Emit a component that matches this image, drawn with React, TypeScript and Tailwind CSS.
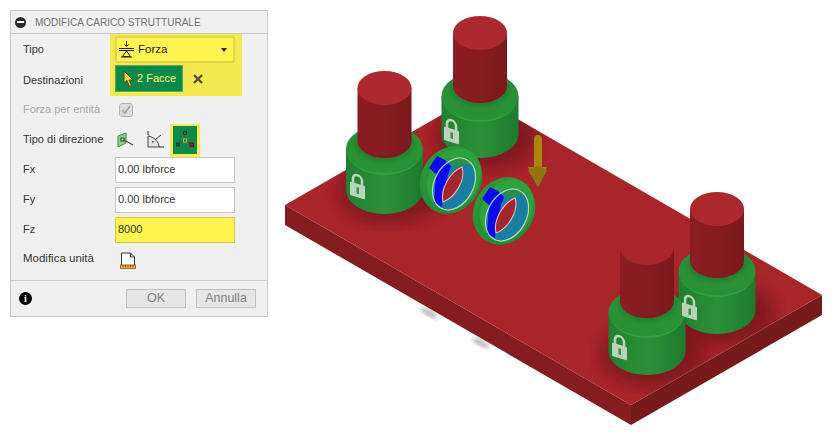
const font = { fontFamily: '"Liberation Sans", Arial, sans-serif' }

function ForceIcon() {
  return (
    <svg width="17" height="17" viewBox="0 0 17 17" fill="none" stroke="#222" strokeWidth="1">
      <path d="M8.5 0v5M6.5 3.5l2 2 2-2M1 7.5h15M1 9.5h15M8.5 10l-4 5.5h8zM3 16h11" />
    </svg>
  )
}

function CursorIcon() {
  return (
    <svg width="12" height="18" viewBox="0 0 12 18">
      <path d="M1 1l0 12 3-2.5 2.5 6 2-1-2.5-5.5 4 0z" fill="#efd33f" stroke="#5a4b12" strokeWidth="1" />
    </svg>
  )
}

function PlaneIcon() {
  return (
    <svg width="18" height="16" viewBox="0 0 18 16" fill="none">
      <path d="M1 4l8-3v10l-8 4z" fill="#8fd48f" stroke="#2f8f3f" />
      <rect x="4" y="6" width="3" height="3" fill="#fff" stroke="#222" />
      <path d="M7 8l9 5" stroke="#6b3a4a" strokeWidth="1.2" />
    </svg>
  )
}

function AngleIcon() {
  return (
    <svg width="18" height="18" viewBox="0 0 18 18" fill="none">
      <path d="M2 5v11h11c0-5-4-9-10-11z" fill="#dfe3ea" stroke="#444" />
      <path d="M2 0v4M9 9l6-5M13 16h5" stroke="#333" />
      <rect x="6" y="10" width="1.5" height="1.5" fill="#333" />
    </svg>
  )
}

function AxesIcon() {
  return (
    <svg width="20" height="20" viewBox="0 0 20 20" fill="none">
      <path d="M10 4v7M10 11l-6 3M10 11l6 3" stroke="#555" />
      <rect x="8.5" y="1.5" width="3" height="3" stroke="#1d3f2c" />
      <rect x="8.5" y="9" width="3" height="3" fill="#1c5f35" stroke="#d8b347" />
      <rect x="1.5" y="13" width="3" height="3" fill="#0e5a2a" stroke="#1d3f2c" />
      <rect x="15" y="13" width="3.5" height="3.5" fill="#b3151b" stroke="#6b1013" />
    </svg>
  )
}

function UnitIcon() {
  return (
    <svg width="16" height="17" viewBox="0 0 16 17" fill="none">
      <path d="M1.5 1h9l4 4v9h-13z" fill="#fff" stroke="#333" />
      <path d="M10.5 1v4h4" stroke="#333" />
      <rect x="0.5" y="13" width="15" height="3.5" fill="#e6b04a" stroke="#a8701a" />
      <path d="M3 13v2M5.5 13v2M8 13v2M10.5 13v2M13 13v2" stroke="#7a5010" />
    </svg>
  )
}

function Lock({ x, y }: { x: number; y: number }) {
  return (
    <g transform={`matrix(1 0.3 0 1 ${x} ${y})`}>
      <path d="M3 10V5.5a4.5 4.5 0 0 1 9 0V10" fill="none" stroke="#b9d4ba" strokeWidth="2.6" />
      <rect x="0" y="9.5" width="15" height="13.5" rx="1" fill="#b9d4ba" />
      <rect x="6.5" y="13" width="2.5" height="6.5" fill="#3f8a4c" />
    </g>
  )
}

function Post({ cx, gTop, gBot, pTop, pBot, flatTop }: { cx: number; gTop: number; gBot: number; pTop: number; pBot: number; flatTop?: boolean }) {
  return (
    <g>
      <path d={`M${cx - 38.5} ${gTop}v${gBot - gTop}a38.5 24 0 0 0 77 0v${gTop - gBot}z`} fill="url(#greenSide)" />
      <ellipse cx={cx} cy={gTop} rx="38.5" ry="24" fill="#2a9137" />
      <path d={`M${cx - 38.5} ${gTop}a38.5 24 0 0 0 77 0a38.5 26 0 0 1 -77 0z`} fill="#33a140" />
      <ellipse cx={cx} cy={pBot + 2} rx="29" ry="18" fill="#1c6a28" opacity="0.55" filter="url(#blur2)" />
      <path d={`M${cx - 27} ${pTop}v${pBot - pTop}a27 17 0 0 0 54 0v${pTop - pBot}z`} fill="url(#redSide)" />
      <ellipse cx={cx} cy={pTop} rx="27" ry="17" fill={flatTop ? '#a8252a' : '#ad2930'} />
    </g>
  )
}

function Disk({ dx, dy }: { dx: number; dy: number }) {
  return (
    <g transform={`translate(${dx} ${dy})`}>
      <ellipse cx="451" cy="180" rx="30" ry="35" transform="rotate(30 451 180)" fill="url(#diskEdge)" />
      <ellipse cx="454" cy="179" rx="25" ry="32" transform="rotate(30 454 179)" fill="#2ea33c" />
      <ellipse cx="454" cy="184" rx="19.5" ry="27.5" transform="rotate(28 454 184)" fill="#1c7da3" />
      <path d="M448 159c10-4 20-3 26 4l1 4c-6-4-10-4-13-1l-8 1z" fill="#2a8f4a" />
      <path d="M437 156l-8 12 7 6-2 29 8 4 1-8 5-25 3-8-6-6z" fill="#0a0aee" />
      <path d="M462 167c4 12-6 30-19 35-3-13 7-30 19-35z" fill="#a3262c" stroke="#ecb3b0" strokeWidth="1.1" />
      <ellipse cx="454" cy="184" rx="19.5" ry="27.5" transform="rotate(28 454 184)" fill="none" stroke="#c9e6c8" strokeOpacity="0.85" strokeWidth="1.2" />
    </g>
  )
}

function Scene() {
  return (
    <svg className="shrink-0 w-[569px] h-[443px]" viewBox="268 0 569 443">
      <defs>
        <linearGradient id="greenSide" x1="0" x2="1" y1="0" y2="0">
          <stop offset="0" stopColor="#1f8030" />
          <stop offset="0.5" stopColor="#2d9038" />
          <stop offset="1" stopColor="#1e7a2e" />
        </linearGradient>
        <linearGradient id="redSide" x1="0" x2="1" y1="0" y2="0">
          <stop offset="0" stopColor="#8a1d21" />
          <stop offset="0.5" stopColor="#851c20" />
          <stop offset="1" stopColor="#7a191c" />
        </linearGradient>
        <linearGradient id="diskEdge" x1="0" x2="1" y1="0" y2="1">
          <stop offset="0" stopColor="#2c9a3a" />
          <stop offset="1" stopColor="#238a33" />
        </linearGradient>
        <filter id="blur6"><feGaussianBlur stdDeviation="7" /></filter>
        <filter id="blur2"><feGaussianBlur stdDeviation="2" /></filter>
        <clipPath id="plateTop"><path d="M285 205L476 95 822 295 631 405z" /></clipPath>
      </defs>

      <ellipse cx="429" cy="313" rx="10" ry="3" transform="rotate(28 429 313)" fill="#b5b5b5" filter="url(#blur2)" />
      <ellipse cx="481" cy="343" rx="10" ry="3" transform="rotate(28 481 343)" fill="#b5b5b5" filter="url(#blur2)" />

      <path d="M285 205L631 405v20L285 225z" fill="#851c20" />
      <path d="M631 405L822 295v20L631 425z" fill="#761a1c" />
      <path d="M285 205L476 95 822 295 631 405z" fill="#a8252a" />

      <g clipPath="url(#plateTop)">
        <ellipse cx="390" cy="192" rx="52" ry="32" fill="#5e1114" opacity="0.5" filter="url(#blur6)" />
        <ellipse cx="486" cy="138" rx="52" ry="32" fill="#5e1114" opacity="0.5" filter="url(#blur6)" />
        <ellipse cx="723" cy="314" rx="52" ry="32" fill="#5e1114" opacity="0.5" filter="url(#blur6)" />
        <ellipse cx="653" cy="355" rx="52" ry="32" fill="#5e1114" opacity="0.5" filter="url(#blur6)" />
      </g>

      <Post cx={480} gTop={96} gBot={134} pTop={33} pBot={86} />
      <Lock x={444} y={117} />
      <Post cx={384.5} gTop={149} gBot={190} pTop={88} pBot={141} />
      <Lock x={350} y={172} />
      <Disk dx={0} dy={0} />
      <Disk dx={53} dy={31} />

      <path d="M534 139a4 4 0 0 1 8 0v28h5l-9 20-10-20h6z" fill="#a6860f" />
      <path d="M528 170l10-4 9 4-9 17z" fill="#8f7410" />

      <Post cx={717} gTop={271} gBot={310} pTop={209} pBot={261} />
      <Post cx={647} gTop={312} gBot={351} pTop={248} pBot={301} flatTop />
      <Lock x={682} y={293} />
      <Lock x={612} y={333} />
    </svg>
  )
}

function Row({ label, children, muted, wide }: { label: string; children: React.ReactNode; muted?: boolean; wide?: boolean }) {
  return (
    <div className="flex items-center h-[30px]">
      <span className={`w-[92px] pb-[2px] ${wide ? 'text-[11.5px]' : ''} ${muted ? 'text-[#a8a8a8]' : 'text-[#333]'}`}>{label}</span>
      {children}
    </div>
  )
}

function Field({ value, hot }: { value: string; hot?: boolean }) {
  return (
    <div className={`w-[120px] h-[26px] flex items-center pl-[2px] pb-[2px] border ${hot ? 'bg-[#fff350] border-[#d9c93a]' : 'bg-white border-[#c8c8c8]'} text-[#333]`}>
      {value}
    </div>
  )
}

export default function App() {
  return (
    <div className="flex w-[837px] h-[443px] bg-white overflow-hidden text-[11px]" style={font}>
      <div className="shrink-0 ml-[10px] mt-[10px] w-[258px] h-[307px] bg-[#f0f0f0] border border-[#c8c8c8] flex flex-col">
        <div className="h-[23px] flex items-center gap-[9px] pl-[4px] border-b border-[#c8c8c8] text-[#6b7078] text-[10px]">
          <span className="w-[11px] h-[11px] rounded-full bg-[#2a2a2a] flex items-center justify-center">
            <span className="w-[7px] h-[1.5px] bg-white" />
          </span>
          MODIFICA CARICO STRUTTURALE
        </div>

        <div className="flex pl-[12px]">
          <div className="w-[87px] text-[#333]">
            <div className="h-[31px] flex items-center">Tipo</div>
            <div className="h-[30px] flex items-center">Destinazioni</div>
          </div>
          <div className="w-[132px] h-[62px] bg-[#f3e84f] pl-[5px] pt-[2px]">
            <div className="w-[120px] h-[27px] bg-[#fff350] border-2 border-[#e3d648] rounded-[2px] flex items-center pl-[1px] pr-[6px] gap-[3px] text-[#222] text-[11.5px]">
              <ForceIcon />
              <span className="flex-1">Forza</span>
              <span className="w-0 h-0 border-x-[3.5px] border-x-transparent border-t-[4px] border-t-[#222]" />
            </div>
            <div className="flex items-center mt-[2px]">
              <div className="w-[68px] h-[27px] bg-[#0d8a4b] border border-[#56a75a] flex items-center pl-[7px] gap-[2px] text-[#fff56a]">
                <CursorIcon />
                2 Facce
              </div>
              <svg className="ml-[10px]" width="10" height="10" viewBox="0 0 10 10" stroke="#54503a" strokeWidth="2.4">
                <path d="M1 1l8 8M9 1L1 9" />
              </svg>
            </div>
          </div>
        </div>

        <div className="pl-[12px] -mt-[1px] flex-1">
          <Row label="Forza per entità" muted>
            <div className="ml-[4px] w-[14px] h-[14px] rounded-[3px] bg-[#dcdcdc] border border-[#b4b4b4] flex items-center justify-center">
              <svg width="10" height="10" viewBox="0 0 10 10" fill="none" stroke="#9a9a9a" strokeWidth="1.5">
                <path d="M1 5l3 3 5-7" />
              </svg>
            </div>
          </Row>
          <Row label="Tipo di direzione">
            <div className="flex items-center">
              <span className="ml-[2px]"><PlaneIcon /></span>
              <span className="ml-[11px]"><AngleIcon /></span>
              <span className="ml-[6px] w-[30px] h-[33px] bg-[#f7ec4e] flex items-center justify-center">
                <span className="w-[24px] h-[28px] bg-[#0d8a4b] flex items-center justify-center"><AxesIcon /></span>
              </span>
            </div>
          </Row>
          <Row label="Fx"><Field value="0.00 lbforce" /></Row>
          <Row label="Fy"><Field value="0.00 lbforce" /></Row>
          <Row label="Fz"><Field value="8000" hot /></Row>
          <Row label="Modifica unità" wide><span className="ml-[5px]"><UnitIcon /></span></Row>
        </div>

        <div className="h-[36px] border-t border-[#c8c8c8] flex items-center pl-[8px] pr-[11px]">
          <span className="w-[13px] h-[13px] rounded-full bg-black text-white flex items-center justify-center text-[10px] font-bold" style={{ fontFamily: '"Liberation Serif", serif' }}>i</span>
          <div className="ml-auto flex gap-[10px] text-[#808080] text-[12.5px]">
            <div className="w-[60px] h-[19px] bg-[#e6e6e6] border border-[#c0c0c0] flex items-center justify-center">OK</div>
            <div className="w-[60px] h-[19px] bg-[#e6e6e6] border border-[#c0c0c0] flex items-center justify-center">Annulla</div>
          </div>
        </div>
      </div>
      <Scene />
    </div>
  )
}
